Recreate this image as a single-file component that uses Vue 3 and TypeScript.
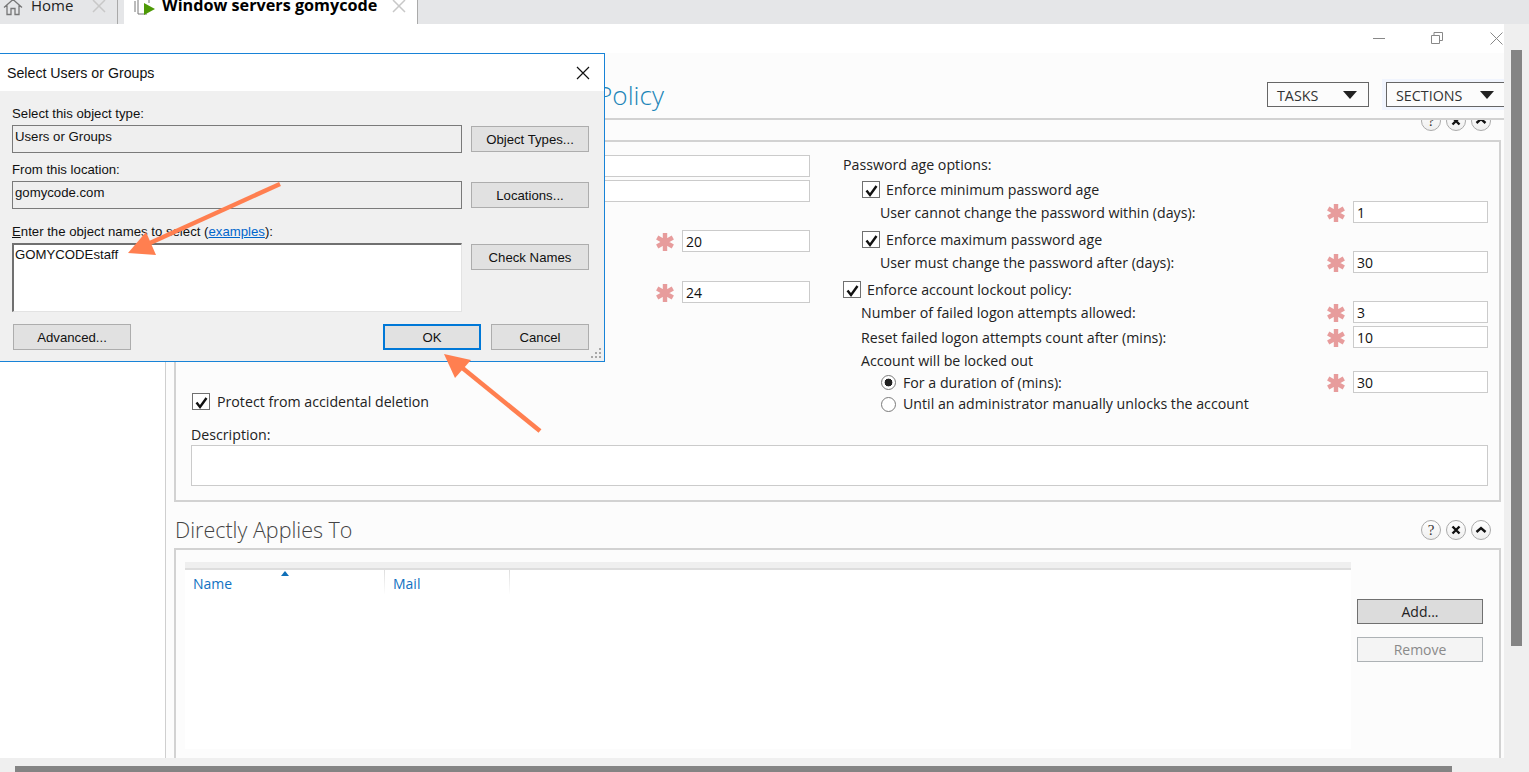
<script setup lang="ts">
interface FieldRow {
  label: string
  value: string
  cls: string
}

const lockoutRows: FieldRow[] = [
  { label: 'Number of failed logon attempts allowed:', value: '3', cls: 'mt2' },
  { label: 'Reset failed logon attempts count after (mins):', value: '10', cls: 'mt3' }
]

const toolIcons = ['help', 'close', 'collapse']
</script>

<template>
  <div class="app">
    <svg class="sprite" width="0" height="0">
      <symbol id="ast" viewBox="0 0 18 18">
        <path d="M9 0v18M1.200 4.500l15.600 9M16.800 4.500l-15.600 9" stroke="#e79c9c" stroke-width="4.400" fill="none" />
      </symbol>
      <symbol id="tick" viewBox="0 0 17 17">
        <path d="M3.500 8.500l3.500 4.500 6.500-9" stroke="#111" stroke-width="2.400" fill="none" />
      </symbol>
    </svg>

    <div class="tabs">
      <div class="tab tab--home">
        <svg class="home-icon" width="20" height="16" viewBox="0 0 20 16">
          <path d="M1 7.500l9-8 9 8M4 5.500V14.500h4v-6h4v6h4V5.500" fill="none" stroke="#777" stroke-width="1.300" />
        </svg>
        <span class="tab-label">Home</span>
        <svg class="tab-x" width="14" height="14" viewBox="0 0 14 14">
          <path d="M1 0l12 12M13 0L1 12" stroke="#c8c8c8" stroke-width="1.500" />
        </svg>
      </div>
      <div class="tab tab--active">
        <svg class="vm-icon" width="24" height="16" viewBox="0 0 24 16">
          <path d="M3 1v11M6 0v14h9M17 0v3" fill="none" stroke="#777" stroke-width="1" />
          <path d="M12 3l11 6-11 6z" fill="#4e9a06" />
        </svg>
        <span class="tab-label tab-label--bold">Window servers gomycode</span>
        <svg class="tab-x tab-x--active" width="14" height="14" viewBox="0 0 14 14">
          <path d="M1 0l12 12M13 0L1 12" stroke="#c8c8c8" stroke-width="1.500" />
        </svg>
      </div>
    </div>

    <div class="middle">
      <div class="window">
        <div class="titlebar">
          <span class="ctl ctl--min"></span>
          <svg class="ctl-svg" width="12" height="12" viewBox="0 0 12 12">
            <path d="M.5 3.500h8v8h-8zM3 3V.5h8.500v8H9" fill="none" stroke="#888" />
          </svg>
          <svg class="ctl-svg ctl-svg--close" width="13" height="13" viewBox="0 0 13 13">
            <path d="M.5.5l12 12M12.500.5l-12 12" fill="none" stroke="#888" />
          </svg>
        </div>

        <div class="body">
          <div class="nav"></div>
          <div class="main">
            <div class="head">
              <h1 class="page-title">Policy</h1>
              <button class="menu-btn menu-btn--tasks">TASKS<i class="caret"></i></button>
              <div class="menu-hl">
                <button class="menu-btn menu-btn--sections">SECTIONS<i class="caret"></i></button>
              </div>
            </div>

            <div class="tools tools--clipped">
              <span v-for="t in toolIcons" :key="t" class="round">
                <svg width="20" height="20" viewBox="0 0 20 20">
                  <text v-if="t === 'help'" x="10" y="15" text-anchor="middle" class="round-q">?</text>
                  <path v-else-if="t === 'close'" d="M6.500 6.500l7 7M13.500 6.500l-7 7" stroke="#111" stroke-width="2.400" fill="none" />
                  <path v-else d="M5.500 12l4.500-4 4.500 4" stroke="#111" stroke-width="2.400" fill="none" />
                </svg>
              </span>
            </div>

            <section class="box box--form">
              <div class="columns">
                <div class="col-left">
                  <input class="field field--wide" type="text" />
                  <input class="field field--wide field--second" type="text" />
                  <div class="left-row left-row--a">
                    <svg class="ast" width="18" height="18"><use href="#ast" /></svg>
                    <input class="field field--short" type="text" value="20" />
                  </div>
                  <div class="left-row left-row--b">
                    <svg class="ast" width="18" height="18"><use href="#ast" /></svg>
                    <input class="field field--short" type="text" value="24" />
                  </div>
                  <label class="check check--protect">
                    <span class="box-check"><svg width="17" height="17"><use href="#tick" /></svg></span>
                    Protect from accidental deletion
                  </label>
                </div>

                <div class="col-right">
                  <div class="line">Password age options:</div>
                  <label class="check check--in mt4">
                    <span class="box-check"><svg width="17" height="17"><use href="#tick" /></svg></span>
                    Enforce minimum password age
                  </label>
                  <div class="row mt2">
                    <span class="row-label row-label--deep">User cannot change the password within (days):</span>
                    <svg class="ast" width="18" height="18"><use href="#ast" /></svg>
                    <input class="field" type="text" value="1" />
                  </div>
                  <label class="check check--in mt6">
                    <span class="box-check"><svg width="17" height="17"><use href="#tick" /></svg></span>
                    Enforce maximum password age
                  </label>
                  <div class="row mt2">
                    <span class="row-label row-label--deep">User must change the password after (days):</span>
                    <svg class="ast" width="18" height="18"><use href="#ast" /></svg>
                    <input class="field" type="text" value="30" />
                  </div>
                  <label class="check mt6">
                    <span class="box-check"><svg width="17" height="17"><use href="#tick" /></svg></span>
                    Enforce account lockout policy:
                  </label>
                  <div v-for="r in lockoutRows" :key="r.label" class="row" :class="r.cls">
                    <span class="row-label">{{ r.label }}</span>
                    <svg class="ast" width="18" height="18"><use href="#ast" /></svg>
                    <input class="field" type="text" :value="r.value" />
                  </div>
                  <div class="line line--locked">Account will be locked out</div>
                  <div class="row">
                    <span class="row-label row-label--radio"><i class="radio radio--on"></i>For a duration of (mins):</span>
                    <svg class="ast" width="18" height="18"><use href="#ast" /></svg>
                    <input class="field" type="text" value="30" />
                  </div>
                  <div class="line line--radio"><i class="radio"></i>Until an administrator manually unlocks the account</div>
                </div>
              </div>

              <div class="desc-label">Description:</div>
              <div class="desc"></div>
            </section>

            <div class="section-head">
              <h2 class="section-title">Directly Applies To</h2>
              <div class="tools">
                <span v-for="t in toolIcons" :key="t" class="round">
                  <svg width="20" height="20" viewBox="0 0 20 20">
                    <text v-if="t === 'help'" x="10" y="15" text-anchor="middle" class="round-q">?</text>
                    <path v-else-if="t === 'close'" d="M6.500 6.500l7 7M13.500 6.500l-7 7" stroke="#111" stroke-width="2.400" fill="none" />
                    <path v-else d="M5.500 12l4.500-4 4.500 4" stroke="#111" stroke-width="2.400" fill="none" />
                  </svg>
                </span>
              </div>
            </div>

            <section class="box box--list">
              <div class="grid">
                <div class="grid-head">
                  <div class="grid-col grid-col--name">Name<i class="sort"></i></div>
                  <div class="grid-col grid-col--mail">Mail</div>
                </div>
              </div>
              <div class="list-actions">
                <button class="act">Add...</button>
                <button class="act act--off">Remove</button>
              </div>
            </section>
          </div>
        </div>
      </div>
      <div class="vscroll"><div class="vthumb"></div></div>
    </div>

    <div class="hscroll"><div class="hthumb"></div></div>

    <!-- picker dialog floats over the page -->
    <div class="dialog">
      <div class="dlg-title">
        <span>Select Users or Groups</span>
        <svg width="14" height="14" viewBox="0 0 14 14">
          <path d="M1 1l12 12M13 1L1 13" stroke="#111" stroke-width="1.200" fill="none" />
        </svg>
      </div>
      <div class="dlg-body">
        <div class="dlg-label dlg-label--first">Select this object type:</div>
        <div class="dlg-row">
          <div class="dlg-input">Users or Groups</div>
          <button class="dlg-btn">Object Types...</button>
        </div>
        <div class="dlg-label dlg-label--second">From this location:</div>
        <div class="dlg-row">
          <div class="dlg-input">gomycode.com</div>
          <button class="dlg-btn">Locations...</button>
        </div>
        <div class="dlg-label"><u>E</u>nter the object names to select (<a class="dlg-link">examples</a>):</div>
        <div class="dlg-row dlg-row--names">
          <div class="dlg-names">GOMYCODEstaff</div>
          <button class="dlg-btn dlg-btn--check">Check Names</button>
        </div>
        <div class="dlg-foot">
          <button class="dlg-btn dlg-btn--adv">Advanced...</button>
          <button class="dlg-btn dlg-btn--ok">OK</button>
          <button class="dlg-btn">Cancel</button>
        </div>
        <svg class="grip" width="12" height="12" viewBox="0 0 12 12">
          <path d="M9 1h2v2H9zM5 5h2v2H5zM9 5h2v2H9zM1 9h2v2H1zM5 9h2v2H5zM9 9h2v2H9z" fill="#a8a8a8" />
        </svg>
      </div>
    </div>

    <!-- annotation arrows drawn on the screenshot -->
    <svg class="arrows" width="1529" height="772" viewBox="0 0 1529 772">
      <path d="M280 184L150 243" stroke="#ff7f50" stroke-width="4.500" fill="none" />
      <path d="M128 253L156 255L146 232z" fill="#ff7f50" />
      <path d="M540 431L460 366" stroke="#ff7f50" stroke-width="4.500" fill="none" />
      <path d="M444 354L471 360L455 378z" fill="#ff7f50" />
    </svg>
  </div>
</template>

<style scoped>
.app {
  position: relative;
  width: 1529px;
  height: 772px;
  overflow: hidden;
  background: #efefef;
  font-family: "Open Sans", sans-serif;
  font-size: 14.2px;
  color: #222;
}

.sprite {
  position: absolute;
}

/* tabs */
.tabs {
  display: flex;
  height: 24px;
  background: #e5e6e8;
  overflow: hidden;
}

.tab {
  display: flex;
  align-items: flex-start;
  height: 24px;
}

.tab--home {
  width: 118px;
  padding-left: 3px;
  border-right: 1px solid #a9a9a9;
  box-sizing: border-box;
}

.tab--active {
  width: 294px;
  margin-left: 6px;
  padding-left: 8px;
  background: #fff;
  border-right: 1px solid #aaa;
  box-sizing: border-box;
}

.home-icon {
  flex: none;
}

.vm-icon {
  flex: none;
}

.tab-label {
  margin-left: 8px;
  font-size: 15px;
  line-height: 10px;
}

.tab-label--bold {
  margin-left: 6px;
  font-size: 16.2px;
  font-weight: 700;
  color: #000;
}

.tab-x {
  flex: none;
  margin-left: 19px;
}

.tab-x--active {
  margin-left: 15px;
}

/* window */
.middle {
  display: flex;
  height: 734px;
}

.window {
  display: flex;
  flex-direction: column;
  width: 1504px;
  flex: none;
  background: #fff;
}

.titlebar {
  display: flex;
  align-items: center;
  justify-content: flex-end;
  height: 29px;
  flex: none;
  padding-right: 1px;
  box-sizing: border-box;
  padding-bottom: 1px;
  background: #fff;
}

.ctl--min {
  width: 12px;
  height: 1px;
  background: #888;
  margin-right: 46px;
}

.ctl-svg {
  margin-right: 47px;
}

.ctl-svg--close {
  margin-right: 0;
}

.body {
  display: flex;
  flex: 1;
  min-height: 0;
}

.nav {
  width: 165px;
  flex: none;
  background: #fff;
  border-right: 1px solid #cfcfcf;
}

.main {
  flex: 1;
  min-width: 0;
  overflow: hidden;
  background: #fcfcfc;
}

.head {
  display: flex;
  align-items: flex-start;
  height: 67px;
  box-sizing: border-box;
  border-bottom: 2px solid #d2d2d2;
}

.page-title {
  margin: 22px 0 0 431px;
  width: 670px;
  font-size: 26.2px;
  line-height: 40px;
  font-weight: 300;
  color: #1d86b8;
}

.menu-btn {
  display: flex;
  align-items: center;
  justify-content: space-between;
  height: 25px;
  box-sizing: border-box;
  border: 1px solid #666;
  background: #fcfcfc;
  font-family: inherit;
  font-size: 14.3px;
  color: #333;
  padding: 1px 11px 0 9px;
}

.menu-btn--tasks {
  width: 102px;
  margin-top: 29px;
}

.menu-hl {
  width: 122px;
  height: 31px;
  margin: 26px 0 0 13px;
  padding: 3px 0 0 4px;
  box-sizing: border-box;
  background: #f1f5fe;
  overflow: hidden;
}

.menu-btn--sections {
  width: 124px;
  padding-right: 15px;
}

.caret {
  width: 0;
  height: 0;
  border-left: 7px solid transparent;
  border-right: 7px solid transparent;
  border-top: 8px solid #222;
}

.tools {
  display: flex;
  gap: 5px;
  height: 20px;
}

.tools--clipped {
  justify-content: flex-end;
  padding-right: 13px;
  overflow: hidden;
  align-items: flex-start;
}

.tools--clipped .round {
  margin-top: -9px;
}

.round {
  display: block;
  width: 20px;
  height: 20px;
  flex: none;
  box-sizing: border-box;
  border-radius: 50%;
  border: 1px solid #aaa;
  background: linear-gradient(#fff, #efefef);
  overflow: hidden;
}

.round svg {
  display: block;
  margin: -1px;
}

.round-q {
  font-family: "Liberation Serif", serif;
  font-size: 15px;
  fill: #333;
}

.box {
  margin: 0 3px 0 8px;
  border: 2px solid #d2d2d2;
}

.box--form {
  height: 362px;
  box-sizing: border-box;
  padding: 13px 11px 0 15px;
}

.columns {
  display: grid;
  grid-template-columns: 619px 645px;
  column-gap: 33px;
  height: 259px;
}

.col-left {
  display: flex;
  flex-direction: column;
}

.field {
  display: block;
  box-sizing: border-box;
  height: 22px;
  width: 135px;
  padding: 0 3px;
  border: 1px solid #cbcbcb;
  background: #fff;
  font-family: inherit;
  font-size: 14px;
  color: #111;
  outline: none;
}

.field--wide {
  width: 100%;
}

.field--second {
  margin-top: 3px;
}

.left-row {
  display: flex;
  align-items: center;
  justify-content: flex-end;
  gap: 8px;
}

.left-row--a {
  margin-top: 28px;
}

.left-row--b {
  margin-top: 29px;
}

.field--short {
  width: 128px;
}

.ast {
  flex: none;
  display: block;
  margin-top: 1px;
}

.check {
  display: flex;
  align-items: center;
  gap: 6px;
  height: 20px;
}

.check--in {
  margin-left: 19px;
}

.check--protect {
  margin-top: 88px;
  margin-left: 1px;
  gap: 7px;
}

.box-check {
  display: block;
  width: 18px;
  height: 17px;
  flex: none;
  box-sizing: border-box;
  border: 1px solid #707070;
  background: #fff;
}

.box-check svg {
  display: block;
}

.line {
  height: 20px;
  line-height: 20px;
}

.line--locked {
  margin: 3px 0 0 18px;
}

.line--radio {
  display: flex;
  align-items: center;
  margin: 1px 0 0 38px;
}

.row {
  display: grid;
  grid-template-columns: 1fr 18px 135px;
  column-gap: 8px;
  align-items: center;
  height: 22px;
}

.row-label {
  margin-left: 18px;
}

.row-label--deep {
  margin-left: 37px;
}

.row-label--radio {
  display: flex;
  align-items: center;
  margin-left: 38px;
}

.radio {
  display: block;
  flex: none;
  width: 15px;
  height: 15px;
  box-sizing: border-box;
  margin-right: 7px;
  border: 1px solid #7a7a7a;
  border-radius: 50%;
  background: #fff;
}

.radio--on {
  background: radial-gradient(circle, #222 0 3.6px, #fff 4.2px);
}

.mt2 {
  margin-top: 2px;
}

.mt3 {
  margin-top: 3px;
}

.mt4 {
  margin-top: 4px;
}

.mt6 {
  margin-top: 6px;
}

.desc-label {
  margin-top: 11px;
  height: 20px;
  line-height: 20px;
}

.desc {
  height: 41px;
  box-sizing: border-box;
  border: 1px solid #cbcbcb;
  background: #fff;
}

.section-head {
  display: flex;
  align-items: center;
  justify-content: space-between;
  height: 46px;
  padding: 9px 13px 0 9px;
  box-sizing: border-box;
}

.section-title {
  margin: 0;
  font-size: 21.5px;
  font-weight: 300;
  color: #444;
}

.box--list {
  display: flex;
  gap: 6px;
  height: 240px;
  padding: 12px 0 0 9px;
  box-sizing: border-box;
}

.grid {
  width: 1166px;
  height: 187px;
  flex: none;
  background: #fff;
  border-top: 6px solid #efefef;
  box-sizing: border-box;
}

.grid-head {
  display: flex;
  height: 24px;
  border-top: 2px solid #ddd;
}

.grid-col {
  position: relative;
  box-sizing: border-box;
  padding: 4px 0 0 8px;
  color: #0f72c2;
  font-size: 14px;
  border-right: 1px solid;
  border-image: linear-gradient(#dcdcdc, #fff) 1;
}

.grid-col--name {
  width: 200px;
}

.grid-col--mail {
  width: 125px;
}

.sort {
  position: absolute;
  top: 1px;
  left: 96px;
  width: 0;
  height: 0;
  border-left: 4px solid transparent;
  border-right: 4px solid transparent;
  border-bottom: 5px solid #0f6fb8;
}

.list-actions {
  display: flex;
  flex-direction: column;
  gap: 13px;
  padding-top: 37px;
}

.act {
  width: 126px;
  height: 25px;
  box-sizing: border-box;
  border: 1px solid #707070;
  background: #dcdcdc;
  font-family: inherit;
  font-size: 14px;
  color: #222;
  padding: 0;
}

.act--off {
  border-color: #adb2b5;
  background: #f4f4f4;
  color: #8a8a8a;
}

.vscroll {
  flex: 1;
  padding: 26px 7px 0;
}

.vthumb {
  height: 596px;
  background: #848484;
}

.hscroll {
  height: 14px;
  padding: 8px 0 0 15px;
  box-sizing: border-box;
}

.hthumb {
  width: 1437px;
  height: 6px;
  background: #848484;
}

/* dialog */
.dialog {
  position: absolute;
  top: 53px;
  left: -1px;
  width: 606px;
  height: 309px;
  box-sizing: border-box;
  border: 1px solid #1883d7;
  background: #f0f0f0;
  font-family: "Liberation Sans", sans-serif;
  font-size: 13.2px;
  color: #111;
}

.dlg-title {
  display: flex;
  align-items: center;
  justify-content: space-between;
  height: 37px;
  padding: 0 14px 0 7px;
  background: #fff;
  font-size: 14.2px;
}

.dlg-body {
  position: relative;
  padding: 0 15px 0 12px;
}

.dlg-label {
  height: 15px;
  padding-top: 15px;
  line-height: 16px;
}

.dlg-label--second {
  padding-top: 9px;
}

.dlg-row {
  display: flex;
  justify-content: space-between;
  align-items: center;
  height: 28px;
  margin-top: 4px;
}

.dlg-input {
  width: 450px;
  height: 28px;
  padding: 2px 0 0 2px;
  box-sizing: border-box;
  border: 1px solid #7a7a7a;
  background: #efefef;
  line-height: 18px;
}

.dlg-row--names {
  height: 69px;
  align-items: flex-start;
}

.dlg-names {
  width: 450px;
  height: 69px;
  box-sizing: border-box;
  padding: 1px 0 0 1px;
  border: 1px solid #e3e3e3;
  border-top: 2px solid #707070;
  border-left: 2px solid #707070;
  background: #fff;
  line-height: 18px;
}

.dlg-link {
  color: #0066cc;
  text-decoration: underline;
}

.dlg-btn {
  width: 118px;
  height: 26px;
  box-sizing: border-box;
  border: 1px solid #adadad;
  background: #e1e1e1;
  font-family: inherit;
  font-size: 13.2px;
  color: #111;
  padding: 0;
}

.dlg-btn--check {
  margin-top: 1px;
}

.dlg-foot {
  display: flex;
  gap: 10px;
  margin-top: 12px;
  padding-left: 1px;
}

.dlg-btn--adv {
  margin-right: 242px;
}

.dlg-btn--ok {
  width: 98px;
  border: 2px solid #0078d7;
}

.dlg-foot .dlg-btn:last-child {
  width: 98px;
}

.grip {
  position: absolute;
  right: 2px;
  top: 256px;
}

.arrows {
  position: absolute;
  top: 0;
  left: 0;
  pointer-events: none;
}
</style>
